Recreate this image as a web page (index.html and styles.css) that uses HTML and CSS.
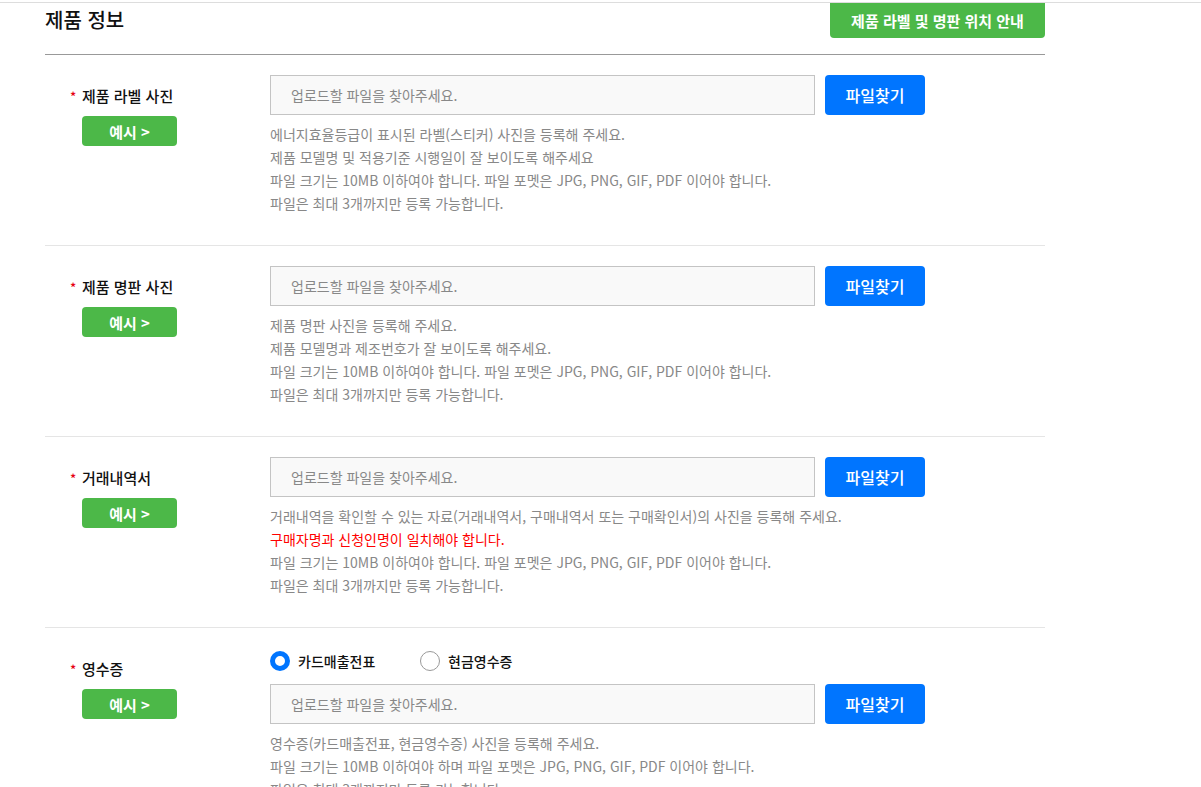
FILE: index.html
```
<!DOCTYPE html>
<html lang="ko">
<head>
  <meta charset="UTF-8">
  <meta name="viewport" content="width=device-width, initial-scale=1.0">
  <title>제품 정보</title>
  <link rel="stylesheet" href="styles.css">
</head>
<body>
<div class="topline"></div>
<div class="wrap">
  <div class="section-head">
    <h2>제품 정보</h2>
    <button class="guide-btn">제품 라벨 및 명판 위치 안내</button>
  </div>

  <div class="row">
    <div class="label-col">
      <p class="label"><span class="req">*</span>제품 라벨 사진</p>
      <button class="example-btn">예시 &gt;</button>
    </div>
    <div class="field-col">
      <div class="file-row">
        <input class="file-input" type="text" placeholder="업로드할 파일을 찾아주세요." readonly>
        <button class="find-btn">파일찾기</button>
      </div>
      <ul class="help">
        <li>에너지효율등급이 표시된 라벨(스티커) 사진을 등록해 주세요.</li>
        <li>제품 모델명 및 적용기준 시행일이 잘 보이도록 해주세요</li>
        <li>파일 크기는 10MB 이하여야 합니다. 파일 포멧은 JPG, PNG, GIF, PDF 이어야 합니다.</li>
        <li>파일은 최대 3개까지만 등록 가능합니다.</li>
      </ul>
    </div>
  </div>

  <div class="row">
    <div class="label-col">
      <p class="label"><span class="req">*</span>제품 명판 사진</p>
      <button class="example-btn">예시 &gt;</button>
    </div>
    <div class="field-col">
      <div class="file-row">
        <input class="file-input" type="text" placeholder="업로드할 파일을 찾아주세요." readonly>
        <button class="find-btn">파일찾기</button>
      </div>
      <ul class="help">
        <li>제품 명판 사진을 등록해 주세요.</li>
        <li>제품 모델명과 제조번호가 잘 보이도록 해주세요.</li>
        <li>파일 크기는 10MB 이하여야 합니다. 파일 포멧은 JPG, PNG, GIF, PDF 이어야 합니다.</li>
        <li>파일은 최대 3개까지만 등록 가능합니다.</li>
      </ul>
    </div>
  </div>

  <div class="row">
    <div class="label-col">
      <p class="label"><span class="req">*</span>거래내역서</p>
      <button class="example-btn">예시 &gt;</button>
    </div>
    <div class="field-col">
      <div class="file-row">
        <input class="file-input" type="text" placeholder="업로드할 파일을 찾아주세요." readonly>
        <button class="find-btn">파일찾기</button>
      </div>
      <ul class="help">
        <li>거래내역을 확인할 수 있는 자료(거래내역서, 구매내역서 또는 구매확인서)의 사진을 등록해 주세요.</li>
        <li class="warn">구매자명과 신청인명이 일치해야 합니다.</li>
        <li>파일 크기는 10MB 이하여야 합니다. 파일 포멧은 JPG, PNG, GIF, PDF 이어야 합니다.</li>
        <li>파일은 최대 3개까지만 등록 가능합니다.</li>
      </ul>
    </div>
  </div>

  <div class="row">
    <div class="label-col">
      <p class="label"><span class="req">*</span>영수증</p>
      <button class="example-btn">예시 &gt;</button>
    </div>
    <div class="field-col">
      <div class="radios">
        <label class="radio"><input type="radio" name="receipt" checked><span class="dot"></span>카드매출전표</label>
        <label class="radio"><input type="radio" name="receipt"><span class="dot"></span>현금영수증</label>
      </div>
      <div class="file-row">
        <input class="file-input" type="text" placeholder="업로드할 파일을 찾아주세요." readonly>
        <button class="find-btn">파일찾기</button>
      </div>
      <ul class="help">
        <li>영수증(카드매출전표, 현금영수증) 사진을 등록해 주세요.</li>
        <li>파일 크기는 10MB 이하여야 하며 파일 포멧은 JPG, PNG, GIF, PDF 이어야 합니다.</li>
        <li>파일은 최대 3개까지만 등록 가능합니다.</li>
      </ul>
    </div>
  </div>
</div>
</body>
</html>
```

FILE: styles.css
```
body {
  margin: 0;
  font-family: "Noto Sans CJK KR", "Noto Sans", sans-serif;
  background-color: #fff;
  color: #111;
}
.topline {
  margin-top: 2px;
  border-top: 1px solid #ddd;
}
.wrap {
  width: 1000px;
  margin-left: 45px;
}
.section-head {
  display: flex;
  justify-content: space-between;
  align-items: flex-start;
  height: 51px;
  border-bottom: 1px solid #999;
}
.section-head h2 {
  margin: 0;
  font-size: 20px;
  font-weight: 500;
  line-height: 34px;
}
.guide-btn {
  width: 215px;
  height: 35px;
  border: none;
  border-radius: 0 0 4px 4px;
  background-color: #4cb848;
  color: #fff;
  font-family: inherit;
  font-size: 15px;
  font-weight: 700;
  cursor: pointer;
}
.row {
  display: flex;
  padding: 20px 0 30px 25px;
  border-bottom: 1px solid #e5e5e5;
}
.label-col {
  width: 200px;
  flex-shrink: 0;
}
.label {
  margin: 10px 0 0;
  font-size: 15px;
  font-weight: 500;
  line-height: 22px;
}
.req {
  display: inline-block;
  width: 12px;
  color: #e60012;
  font-size: 13px;
}
.example-btn {
  display: block;
  width: 95px;
  height: 30px;
  margin: 8px 0 0 12px;
  border: none;
  border-radius: 4px;
  background-color: #4cb848;
  color: #fff;
  font-family: inherit;
  font-size: 15px;
  font-weight: 700;
  cursor: pointer;
}
.file-row {
  display: flex;
  gap: 10px;
}
.file-input {
  box-sizing: border-box;
  width: 545px;
  height: 40px;
  padding: 0 20px;
  border: 1px solid #c4c4c4;
  background-color: #f9f9f9;
  font-family: inherit;
  font-size: 14px;
  color: #888;
  outline: none;
}
.file-input::placeholder {
  color: #888;
}
.find-btn {
  width: 100px;
  height: 40px;
  border: none;
  border-radius: 4px;
  background-color: #0075ff;
  color: #fff;
  font-family: inherit;
  font-size: 16px;
  font-weight: 500;
  cursor: pointer;
}
.help {
  margin: 8px 0 0;
  padding: 0;
  list-style: none;
  font-size: 14px;
  line-height: 23px;
  color: #888;
}
.help .warn {
  color: #ff0000;
}
.radios {
  display: flex;
  height: 26px;
  margin-bottom: 10px;
  align-items: center;
}
.radio {
  display: flex;
  align-items: center;
  width: 150px;
  font-size: 14px;
  font-weight: 500;
  cursor: pointer;
}
.radio input {
  display: none;
}
.dot {
  box-sizing: border-box;
  width: 20px;
  height: 20px;
  margin-right: 8px;
  border: 1px solid #999;
  border-radius: 50%;
  background-color: #fff;
}
.radio input:checked + .dot {
  border: 5px solid #0075ff;
}
```
